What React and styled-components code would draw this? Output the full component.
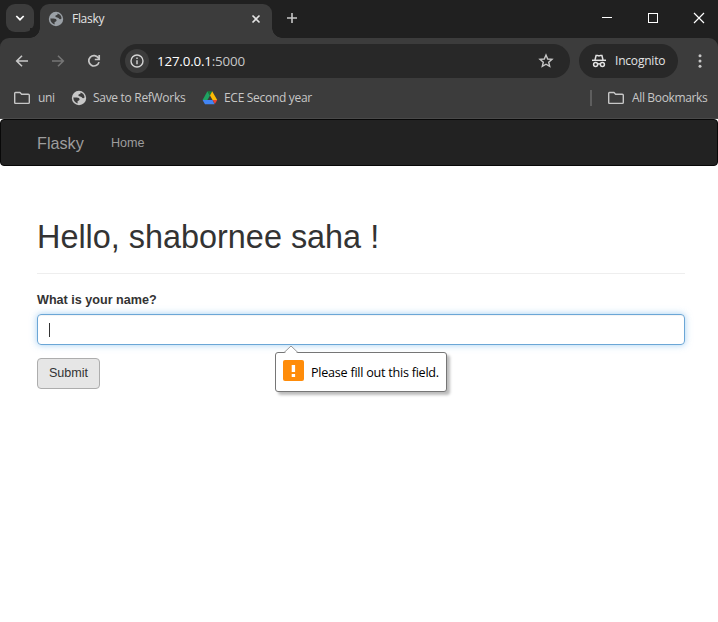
import React from "react";
import styled, { createGlobalStyle } from "styled-components";

const GlobalStyle = createGlobalStyle`
  * { box-sizing: border-box; }
  body { margin: 0; background: #fff; overflow: hidden; }
  svg { display: block; flex: none; }
  button, input { font-family: inherit; }
`;

const Browser = styled.div`
  display: flex;
  flex-direction: column;
  width: 718px;
  height: 622px;
  background: #fff;
`;

const Chrome = styled.header`
  background: #202020;
  font-family: "Open Sans", "Noto Sans", sans-serif;
  color: #e3e3e3;
  height: 119px;
  flex: none;
`;

const TabStrip = styled.div`
  display: flex;
  height: 38px;
  padding-top: 4px;
`;

const TabSearch = styled.button`
  width: 28px;
  height: 28px;
  margin: 0 6px;
  padding: 0;
  border: 0;
  border-radius: 9px;
  background: #3c3c3c;
  display: grid;
  place-items: center;
`;

const Tab = styled.div`
  position: relative;
  width: 232px;
  height: 34px;
  padding: 0 10px 5px 8px;
  display: flex;
  align-items: center;
  background: #3c3c3c;
  border-radius: 9px 9px 0 0;

  &::before,
  &::after {
    content: "";
    position: absolute;
    bottom: 0;
    width: 10px;
    height: 10px;
  }
  &::before {
    left: -10px;
    background: radial-gradient(circle at 0 0, #202020 9.5px, #3c3c3c 10px);
  }
  &::after {
    right: -10px;
    background: radial-gradient(circle at 100% 0, #202020 9.5px, #3c3c3c 10px);
  }
`;

const Label = styled.span`
  white-space: nowrap;
  line-height: 16px;
  font-size: ${(p) => p.$size ?? 12}px;
  letter-spacing: ${(p) => p.$spacing ?? -0.3}px;
`;

const TabTitle = styled(Label)`
  margin-left: 8px;
  flex: 1;
`;

const NewTab = styled.div`
  margin: 6px 0 0 12px;
`;

const WindowControls = styled.div`
  display: flex;
  gap: 30px;
  margin: 6px 11px 0 auto;
`;

const Toolbar = styled.div`
  display: flex;
  align-items: center;
  height: 46px;
  padding: 0 10px 0 14px;
  background: #3c3c3c;
  border-radius: 9px 9px 0 0;
`;

const NavButtons = styled.div`
  display: flex;
  gap: 20px;
  width: 106px;
`;

const AddressBar = styled.div`
  display: flex;
  align-items: center;
  width: 450px;
  height: 34px;
  padding: 0 16px 0 5px;
  border-radius: 17px;
  background: #282828;
`;

const SiteInfo = styled.span`
  display: grid;
  place-items: center;
  width: 24px;
  height: 24px;
  border-radius: 50%;
  background: #3c3c3c;
  margin-right: 8px;
`;

const Url = styled(Label)`
  flex: 1;
  color: #fff;
`;

const Port = styled.span`
  color: #c7c7c7;
`;

const IncognitoChip = styled.div`
  display: flex;
  align-items: center;
  gap: 8px;
  width: 99px;
  height: 34px;
  margin: 0 14px 0 9px;
  padding-left: 12px;
  border-radius: 17px;
  background: #282828;
`;

const BookmarksBar = styled.div`
  display: flex;
  align-items: center;
  height: 35px;
  padding: 0 10px 7px 14px;
  background: #3c3c3c;
  border-bottom: 1px solid #4a4a4a;
  color: #c7c7c7;
`;

const Bookmark = styled.div`
  display: flex;
  align-items: center;
  gap: ${(p) => p.$gap}px;
  width: ${(p) => p.$width}px;
`;

const Divider = styled.span`
  width: 2px;
  height: 16px;
  margin: 0 16px 0 auto;
  background: #5e5e5e;
`;

const Page = styled.main`
  font-family: "Liberation Sans", Arial, sans-serif;
  font-size: 12.6px;
  line-height: 18px;
  color: #333;
`;

const Navbar = styled.nav`
  display: flex;
  align-items: center;
  height: 47px;
  padding: 0 36px;
  background: #222;
  border: 1px solid #080808;
  border-radius: 4px;
  color: #9d9d9d;
`;

const Brand = styled.span`
  font-size: 16.2px;
  width: 74px;
`;

const Content = styled.div`
  padding: 0 33px 0 37px;
`;

const Heading = styled.h1`
  margin: 53px 0 0;
  padding-bottom: 18px;
  border-bottom: 1px solid #eee;
  font-size: 32.4px;
  font-weight: 400;
  line-height: 36px;
`;

const FieldLabel = styled.label`
  display: block;
  margin: 17px 0 5px;
  font-weight: 700;
  line-height: 18px;
`;

const Field = styled.div`
  position: relative;
`;

const TextField = styled.div`
  display: flex;
  align-items: center;
  height: 31px;
  padding-left: 11px;
  border: 1px solid #6ba6d6;
  border-radius: 4px;
  box-shadow: inset 0 1px 1px rgba(0, 0, 0, 0.05), 0 0 7px rgba(102, 175, 233, 0.6);
`;

const Caret = styled.span`
  width: 1px;
  height: 14px;
  background: #333;
`;

const Submit = styled.button`
  display: block;
  width: 63px;
  height: 31px;
  margin-top: 13px;
  padding: 0 0 2px;
  border: 1px solid #adadad;
  border-radius: 4px;
  background: #e6e6e6;
  color: #333;
  font-size: 12.6px;
`;

const Tooltip = styled.div`
  position: absolute;
  top: 38px;
  left: 238px;
  display: flex;
  align-items: center;
  gap: 7px;
  width: 172px;
  height: 40px;
  padding: 0 0 0 7px;
  border: 1px solid #767676;
  border-radius: 3px;
  background: #fff;
  box-shadow: 3px 3px 3px rgba(0, 0, 0, 0.27);
  color: #000;
  font-family: "Open Sans", "Noto Sans", sans-serif;
`;

const TooltipText = styled(Label)`
  padding-top: 2px;
`;

const Pointer = styled.svg`
  position: absolute;
  left: 7px;
  top: -8px;
`;

const Warning = styled.span`
  display: grid;
  place-items: center;
  width: 21px;
  height: 21px;
  margin-top: -3px;
  border-radius: 2px;
  background: #ff8c0a;
`;

const Globe = ({ color }) => (
  <svg width="16" height="16" viewBox="0 0 16 16">
    <circle cx="8" cy="8" r="7.2" fill={color} />
    <path d="M2.3 7.5H5.6Q8.6 7.6 8.6 9.6 8.4 10.9 6.6 10.9V13.4Q2.5 12.2 2.3 7.5ZM9.6 2.5Q13 3.4 13.6 7.2 12.9 8.6 11.4 8.1 10.7 6.6 9.2 6.6 7.2 6.4 7.3 5 7.6 4.1 9.3 4Z" fill="#3c3c3c" />
  </svg>
);

const Folder = () => (
  <svg width="16" height="14" viewBox="0 0 16 14" fill="none" stroke="#c7c7c7" strokeWidth="1.4" strokeLinejoin="round">
    <path d="M1.5 1.5H6L7.6 3.2H14.3Q15.3 3.2 15.3 4.2V11.4Q15.3 12.4 14.3 12.4H1.7Q.7 12.4.7 11.4V2.3Q.7 1.5 1.5 1.5Z" />
  </svg>
);

const Drive = () => (
  <svg width="16" height="16" viewBox="0 0 16 16">
    <path d="M5.4 1.2 8 5.6 5.4 10H.6Z" fill="#1ea362" />
    <path d="M5.4 1.2H10.2L8 5.6Z" fill="#188038" />
    <path d="M10.2 1.2 15.2 10H10.6L8 5.6Z" fill="#fbbc04" />
    <path d="M.6 10H10.6L12.6 14.2H3.6Q3 14.2 2.7 13.7Z" fill="#4285f4" />
    <path d="M10.6 10H15.2L12.9 14Z" fill="#ea4335" />
  </svg>
);

const Incognito = () => (
  <svg width="16" height="16" viewBox="0 0 16 16" fill="none" stroke="#e3e3e3" strokeWidth="1.5">
    <path d="M1 7.3H15" />
    <path d="M4 7 5.1 2.4H6.5L8 3 9.5 2.4H10.9L12 7" />
    <circle cx="4.6" cy="11.5" r="2" />
    <circle cx="11.4" cy="11.5" r="2" />
    <path d="M6.5 11.1Q8 10.2 9.5 11.1" />
  </svg>
);

export default function App() {
  return (
    <Browser>
      <GlobalStyle />
      <Chrome>
        <TabStrip>
          <TabSearch aria-label="Search tabs">
            <svg width="10" height="8" viewBox="0 0 10 8" fill="none" stroke="#fff" strokeWidth="1.7">
              <path d="M1.3 2 5 5.7 8.7 2" />
            </svg>
          </TabSearch>
          <Tab>
            <Globe color="#9aa0a6" />
            <TabTitle>Flasky</TabTitle>
            <svg width="12" height="12" viewBox="0 0 12 12" stroke="#e3e3e3" strokeWidth="1.6">
              <path d="M2.5 2.5 9.5 9.5M9.5 2.5 2.5 9.5" />
            </svg>
          </Tab>
          <NewTab>
            <svg width="16" height="16" viewBox="0 0 16 16" stroke="#c7c7c7" strokeWidth="1.6">
              <path d="M3 8H13M8 3V13" />
            </svg>
          </NewTab>
          <WindowControls>
            <svg width="16" height="16" viewBox="0 0 16 16" stroke="#fff"><path d="M3 7.5H13" /></svg>
            <svg width="16" height="16" viewBox="0 0 16 16" stroke="#fff" fill="none"><rect x="3.5" y="3.5" width="9" height="9" /></svg>
            <svg width="16" height="16" viewBox="0 0 16 16" stroke="#fff" strokeWidth="1.2"><path d="M3 3 13 13M13 3 3 13" /></svg>
          </WindowControls>
        </TabStrip>
        <Toolbar>
          <NavButtons>
            <svg width="16" height="16" viewBox="0 0 16 16" stroke="#c7c7c7" strokeWidth="1.6" fill="none">
              <path d="M14 8H3M8 2.7 2.7 8 8 13.3" />
            </svg>
            <svg width="16" height="16" viewBox="0 0 16 16" stroke="#757575" strokeWidth="1.6" fill="none">
              <path d="M2 8H13M8 2.7 13.3 8 8 13.3" />
            </svg>
            <svg width="16" height="16" viewBox="0 0 16 16" stroke="#c7c7c7" strokeWidth="1.7" fill="none">
              <path d="M13 9.1A5.2 5.2 0 1 1 12.5 5.2L13.2 6.4M13.2 2V6.5H8.8" />
            </svg>
          </NavButtons>
          <AddressBar>
            <SiteInfo>
              <svg width="14" height="14" viewBox="0 0 14 14" stroke="#d5d5d5" strokeWidth="1.4" fill="none">
                <circle cx="7" cy="7" r="6" />
                <path d="M7 6.2V10.3M7 3.5V5" />
              </svg>
            </SiteInfo>
            <Url $size={13.4} $spacing={-0.2}>127.0.0.1<Port>:5000</Port></Url>
            <svg width="16" height="16" viewBox="0 0 16 16" fill="none" stroke="#c7c7c7" strokeWidth="1.4">
              <path d="M8 2 9.7 6 14 6.4 10.7 9.2 11.7 13.4 8 11.2 4.3 13.4 5.3 9.2 2 6.4 6.3 6Z" />
            </svg>
          </AddressBar>
          <IncognitoChip>
            <Incognito />
            <Label $spacing={-0.2}>Incognito</Label>
          </IncognitoChip>
          <svg width="16" height="16" viewBox="0 0 16 16" fill="#c7c7c7">
            <circle cx="8" cy="2.8" r="1.5" /><circle cx="8" cy="8" r="1.5" /><circle cx="8" cy="13.2" r="1.5" />
          </svg>
        </Toolbar>
        <BookmarksBar>
          <Bookmark $gap={8} $width={57}><Folder /><Label>uni</Label></Bookmark>
          <Bookmark $gap={6} $width={131}><Globe color="#c7c7c7" /><Label>Save to RefWorks</Label></Bookmark>
          <Bookmark $gap={6} $width={120}><Drive /><Label>ECE Second year</Label></Bookmark>
          <Divider />
          <Bookmark $gap={8} $width={100}><Folder /><Label $spacing={-0.35}>All Bookmarks</Label></Bookmark>
        </BookmarksBar>
      </Chrome>
      <Page>
        <Navbar>
          <Brand>Flasky</Brand>
          <span>Home</span>
        </Navbar>
        <Content>
          <Heading>Hello, shabornee saha !</Heading>
          <FieldLabel>What is your name?</FieldLabel>
          <Field>
            <TextField role="textbox"><Caret /></TextField>
            <Tooltip>
              <Pointer width="16" height="9" viewBox="0 0 16 9">
                <path d="M1 9 8 1 15 9Z" fill="#fff" />
                <path d="M1 7.6 8 1 15 7.6" fill="none" stroke="#999" />
              </Pointer>
              <Warning>
                <svg width="5" height="12" viewBox="0 0 5 12" fill="#fff">
                  <rect x=".7" y="0" width="3.4" height="7" /><rect x=".7" y="9" width="3.4" height="3" />
                </svg>
              </Warning>
              <TooltipText $size={12.6} $spacing={-0.25}>Please fill out this field.</TooltipText>
            </Tooltip>
          </Field>
          <Submit>Submit</Submit>
        </Content>
      </Page>
    </Browser>
  );
}
